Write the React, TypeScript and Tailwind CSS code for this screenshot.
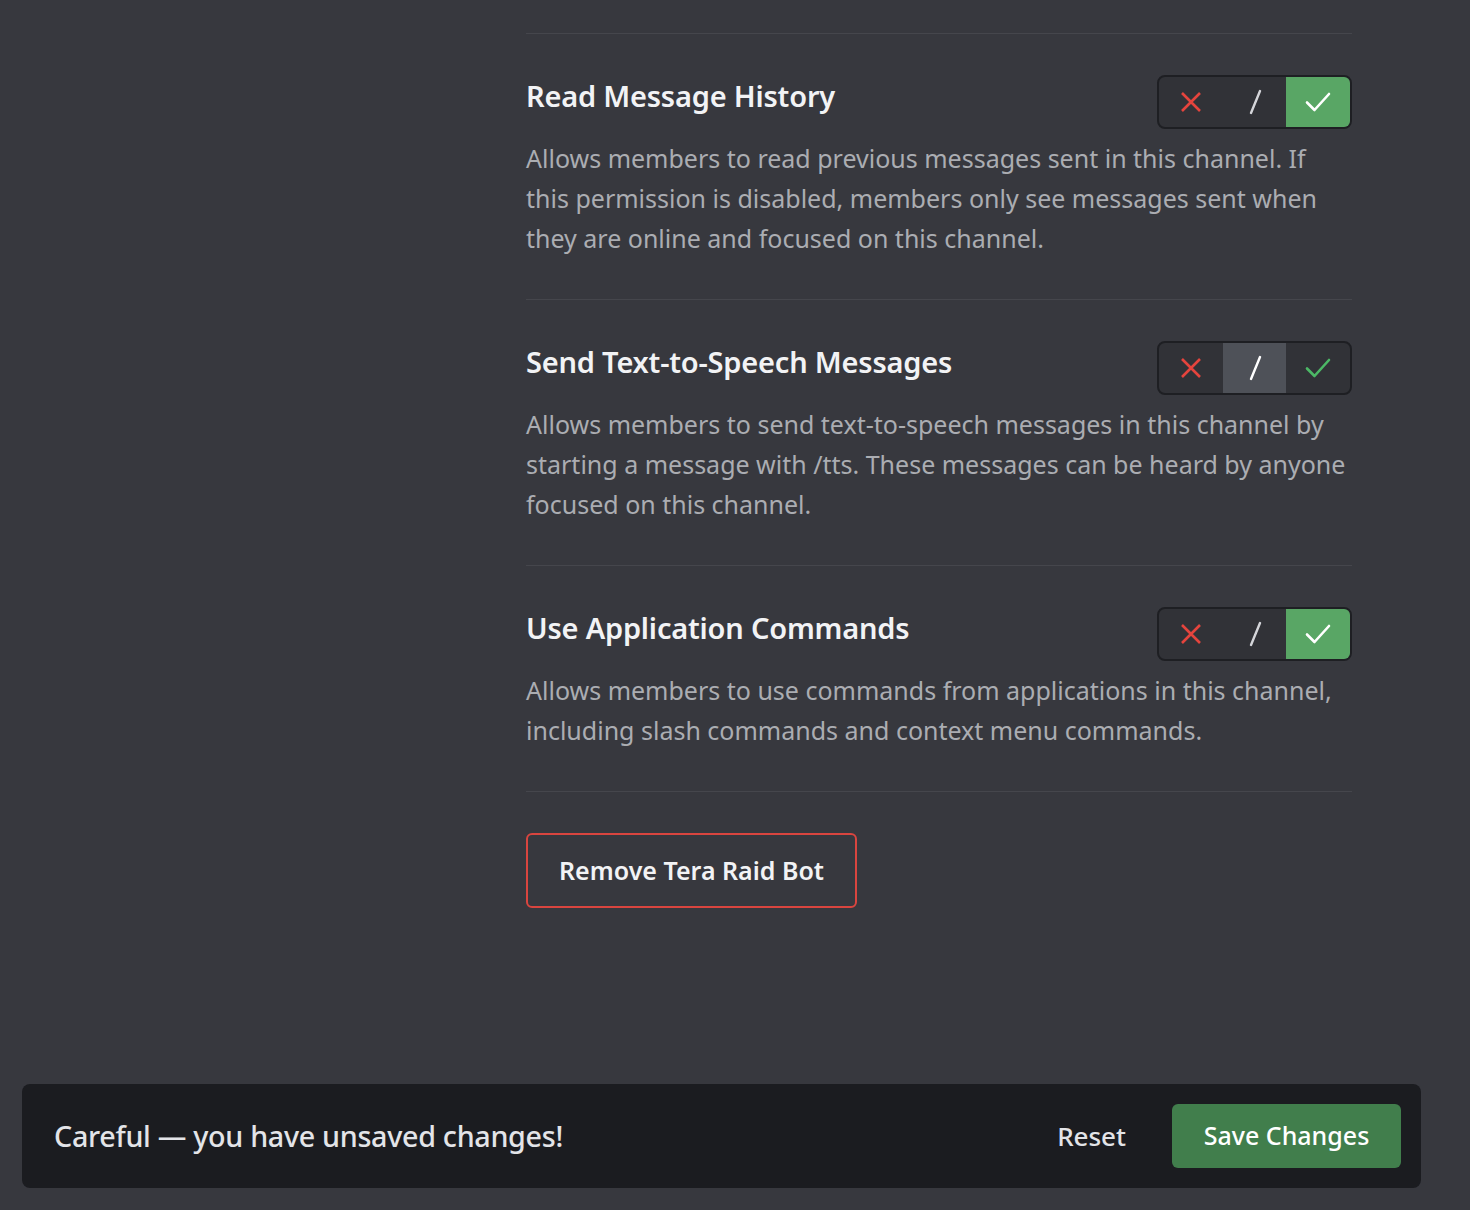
import React from "react";

type State = "deny" | "neutral" | "allow";

const XIcon = () => (
  <svg width="24" height="24" viewBox="0 0 24 24" fill="none">
    <path d="M3 3L21 21M21 3L3 21" stroke="#e5443d" strokeWidth="2.6" strokeLinecap="butt" />
  </svg>
);
const SlashIcon = ({ color }: { color: string }) => (
  <svg width="24" height="26" viewBox="0 0 24 26" fill="none">
    <path d="M17 2L8 24" stroke={color} strokeWidth="2.4" strokeLinecap="round" />
  </svg>
);
const CheckIcon = ({ color }: { color: string }) => (
  <svg width="26" height="22" viewBox="0 0 26 22" fill="none">
    <path d="M2 11.5L9.5 19L24 3" stroke={color} strokeWidth="2.6" strokeLinecap="round" strokeLinejoin="round" />
  </svg>
);

function Toggle({ state }: { state: State }) {
  return (
    <div className="flex h-[54px] w-[195px] shrink-0 overflow-hidden rounded-[8px] border-2 border-[#1e1f23] bg-[#313237]">
      <div className="flex flex-1 items-center justify-center">
        <XIcon />
      </div>
      <div className={`flex flex-1 items-center justify-center ${state === "neutral" ? "bg-[#4e5158]" : ""}`}>
        <SlashIcon color={state === "neutral" ? "#ffffff" : "#d4d5d9"} />
      </div>
      <div className={`flex flex-1 items-center justify-center ${state === "allow" ? "bg-[#59a665]" : ""}`}>
        <CheckIcon color={state === "allow" ? "#ffffff" : "#4cb866"} />
      </div>
    </div>
  );
}

function Section({ title, desc, state }: { title: string; desc: string; state: State }) {
  return (
    <div className="border-t border-[#45464c] pt-[41px] pb-[41px]">
      <div className="flex items-start justify-between">
        <div className="mt-[3px] text-[29px] leading-[36px] font-semibold text-[#f2f3f5] tracking-[-0.2px]">{title}</div>
        <Toggle state={state} />
      </div>
      <p className="mt-[9px] text-[25px] leading-[40px] text-[#abadb2]">{desc}</p>
    </div>
  );
}

export default function App() {
  return (
    <div
      className="flex h-[1210px] w-full flex-col bg-[#37383e]"
      style={{ fontFamily: '"Noto Sans", "Open Sans", sans-serif' }}
    >
      <div className="ml-[526px] w-[826px] pt-[33px]">
        <Section
          title="Read Message History"
          state="allow"
          desc="Allows members to read previous messages sent in this channel. If this permission is disabled, members only see messages sent when they are online and focused on this channel."
        />
        <Section
          title="Send Text-to-Speech Messages"
          state="neutral"
          desc="Allows members to send text-to-speech messages in this channel by starting a message with /tts. These messages can be heard by anyone focused on this channel."
        />
        <Section
          title="Use Application Commands"
          state="allow"
          desc="Allows members to use commands from applications in this channel, including slash commands and context menu commands."
        />
        <div className="border-t border-[#45464c] pt-[41px]">
          <button className="flex h-[75px] w-[331px] items-center justify-center rounded-[6px] border-2 border-[#d9453f] text-[25px] font-semibold text-[#f2f3f5]">
            Remove Tera Raid Bot
          </button>
        </div>
      </div>
      <div className="ml-[22px] mr-[49px] mb-[22px] mt-auto flex h-[104px] items-center justify-between rounded-[8px] bg-[#1b1c20] pl-[32px] pr-[20px]">
        <div className="text-[28.7px] font-medium text-[#e3e4e8] tracking-[-0.3px]">Careful — you have unsaved changes!</div>
        <div className="flex items-center gap-[46px]">
          <button className="text-[26px] font-medium text-[#e3e4e8]">Reset</button>
          <button className="flex h-[64px] w-[229px] items-center justify-center rounded-[6px] bg-[#417e4c] text-[25px] font-medium text-white">
            Save Changes
          </button>
        </div>
      </div>
    </div>
  );
}
